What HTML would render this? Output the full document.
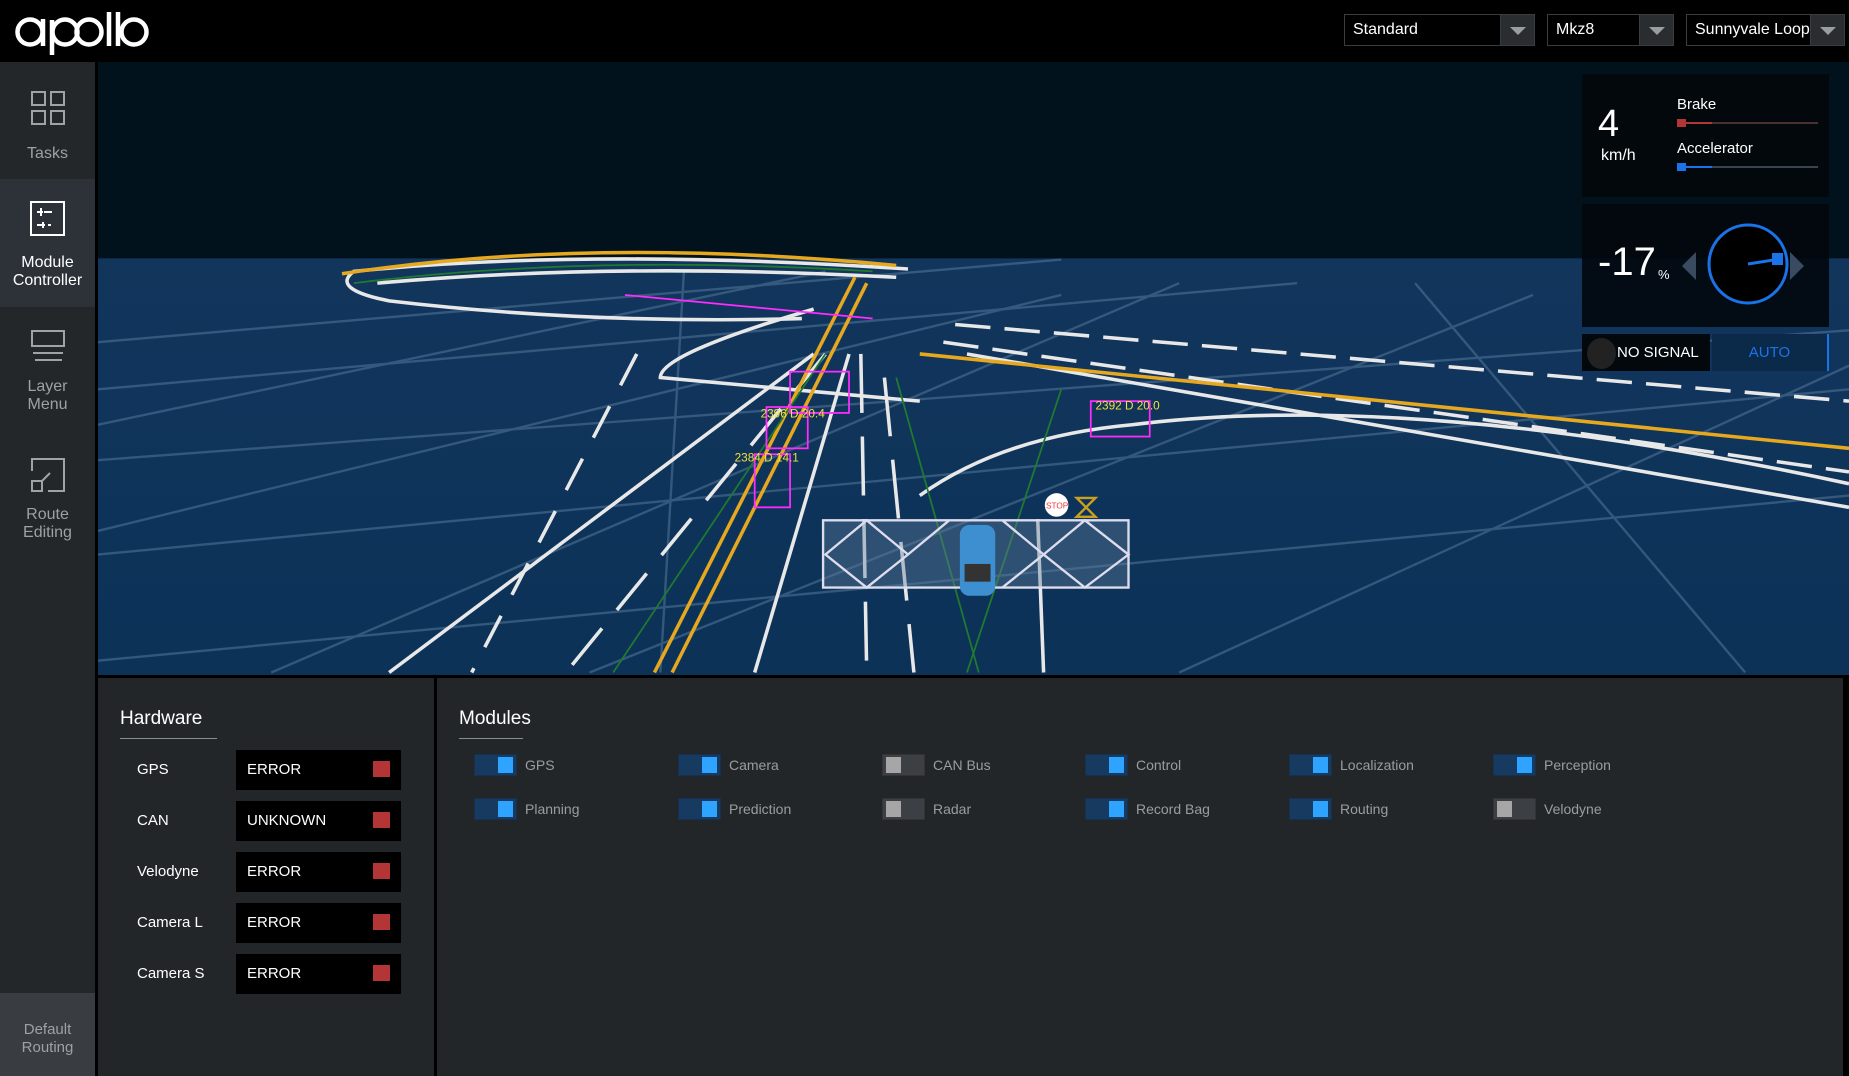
<!DOCTYPE html>
<html><head><meta charset="utf-8"><style>
*{margin:0;padding:0;box-sizing:border-box}
body{width:1849px;height:1076px;overflow:hidden;background:#000;font-family:"Liberation Sans",sans-serif;position:relative}
.abs{position:absolute}
#hdr{left:0;top:0;width:1849px;height:62px;background:#000}
.dd{position:absolute;top:14px;height:32px;border:1px solid #3a3d40;background:#000;color:#fff;font-size:16px;line-height:30px;padding-left:8px}
.dd .ar{position:absolute;right:0;top:0;width:34px;height:30px;background:#2a2d30;border-left:1px solid #3a3d40}
.dd .ar:after{content:"";position:absolute;left:9px;top:12px;border-left:8px solid transparent;border-right:8px solid transparent;border-top:8px solid #9a9da0}
#side{left:0;top:62px;width:95px;height:1014px;background:#24272a;border-right:0}
.si{position:absolute;left:0;width:95px;text-align:center;color:#9ea1a4;font-size:15px;line-height:18px}
#bot{left:98px;top:675px;width:1751px;height:401px;background:#000}
.pn{position:absolute;top:3px;height:398px;background:#232629}
h3{position:absolute;font-weight:normal;color:#fff;font-size:19px}
.ul{position:absolute;height:1px;background:#8a8d90}
.hl{position:absolute;color:#fff;font-size:15px}
.hb{position:absolute;width:165px;height:40px;background:#000;color:#fff;font-size:15px;line-height:40px;padding-left:11px}
.hb i{position:absolute;right:11px;top:11px;width:17px;height:16px;background:#b33535}
.tg{position:absolute;width:43px;height:22px;background:#173a60;border:1px solid #15314f}
.tg i{position:absolute;right:3px;top:2px;width:15px;height:16px;background:#2ea3ff}
.tg.off{background:#3c4044;border-color:#333}
.tg.off i{left:3px;right:auto;background:#a6a6a6}
.tl{position:absolute;color:#9a9da0;font-size:14px}
</style></head><body>
<svg class="abs" style="left:0;top:0" width="1849" height="1076" viewBox="0 0 1568 912" preserveAspectRatio="none">
<defs><linearGradient id="g" x1="0" y1="0" x2="0" y2="1"><stop offset="0" stop-color="#12355c"/><stop offset="1" stop-color="#0c3258"/></linearGradient></defs>
<rect x="80" y="50" width="1488" height="170" fill="#02121c"/>
<rect x="80" y="219" width="1488" height="355" fill="url(#g)"/>
<g stroke="#5a7ea0" stroke-width="2" opacity="0.5" fill="none">
<path d="M83 290 L900 220"/><path d="M83 330 L1100 240"/><path d="M83 390 L1568 280"/><path d="M83 470 L1568 330"/><path d="M83 560 L1568 420"/>
<path d="M83 360 L700 230"/><path d="M83 450 L900 250"/><path d="M230 570 L1000 240"/><path d="M500 570 L1300 250"/><path d="M1000 570 L1568 310"/>
<path d="M560 570 L580 230"/><path d="M1480 570 L1200 240"/></g>
<g stroke="#e8e8e8" stroke-width="3" fill="none">
<path d="M770 228 Q500 210 300 230 Q280 245 330 255 Q500 275 680 270"/>
<path d="M760 235 Q520 222 320 240"/>
<path d="M690 262 Q560 300 560 320 L780 340"/>
<path d="M800 290 L1568 400" stroke-dasharray="30 12"/>
<path d="M810 275 L1568 340" stroke-dasharray="30 12"/>
<path d="M820 300 L1568 430"/>
<path d="M690 300 L330 570"/><path d="M700 300 L480 570" stroke-dasharray="40 20"/>
<path d="M720 300 L640 570"/><path d="M730 300 L735 570" stroke-dasharray="50 20"/>
<path d="M750 320 L775 570" stroke-dasharray="50 20"/>
<path d="M1568 410 Q1200 330 960 360 Q850 370 780 420"/>
<path d="M880 440 L885 570"/>
<path d="M540 300 L400 570" stroke-dasharray="30 20"/>
</g>
<g stroke="#e6a81e" stroke-width="3" fill="none"><path d="M725 235 L555 570"/><path d="M735 240 L570 570"/><path d="M780 300 L1568 380"/><path d="M290 232 Q500 200 760 225"/></g>
<g stroke="#1f7a30" stroke-width="1.5" fill="none"><path d="M700 300 L520 570"/><path d="M760 320 L830 570"/><path d="M900 330 L820 570"/><path d="M300 240 Q500 215 740 230"/></g>
<g stroke="#ff2bff" stroke-width="1.5" fill="none">
<rect x="640" y="385" width="30" height="45"/><rect x="650" y="345" width="35" height="35"/><rect x="925" y="340" width="50" height="30"/><rect x="670" y="315" width="50" height="35"/><path d="M530 250 L740 270"/></g>
<g fill="#f0e040" font-size="10" font-family="Liberation Sans"><text x="623" y="391">2384 D 14.1</text><text x="645" y="354">2396 D 20.4</text><text x="929" y="347">2392 D 20.0</text></g>
<g stroke="#dde" stroke-width="2" fill="#5f7c9c" fill-opacity="0.4"><rect x="698" y="441" width="259" height="57"/></g>
<path d="M700 470 L735 441 L770 470 L735 498 Z M770 470 L805 441 M850 441 L885 470 L920 441 L957 470 L920 498 L885 470 L850 498" stroke="#dde" stroke-width="2" fill="none"/>
<rect x="814" y="445" width="30" height="60" rx="8" fill="#3e8fd0"/><rect x="818" y="478" width="22" height="15" fill="#333"/>
<circle cx="896" cy="428" r="10" fill="#fff"/><text x="887" y="431" font-size="7" fill="#e33" font-family="Liberation Sans">STOP</text>
<path d="M913 422 L929 422 L921 430 L929 438 L913 438 L921 430 Z" fill="none" stroke="#c9a020" stroke-width="2"/>
</svg>
<div id="hdr" class="abs">
<svg class="abs" style="left:0;top:0" width="160" height="62" fill="none" stroke="#fff" stroke-width="4.5">
<circle cx="30" cy="32" r="12.5"/><path d="M43 19V46"/>
<path d="M52 20V55"/><circle cx="65" cy="32" r="12.5"/>
<circle cx="89" cy="32" r="12.5"/>
<path d="M109 12V46M118 12V46"/>
<circle cx="134" cy="32" r="12.5"/>
</svg>
<div class="dd" style="left:1344px;width:191px">Standard<div class="ar"></div></div>
<div class="dd" style="left:1547px;width:127px">Mkz8<div class="ar"></div></div>
<div class="dd" style="left:1686px;width:159px">Sunnyvale Loop<div class="ar"></div></div>
</div>
<div id="side" class="abs">
<div class="si" style="top:0;height:117px"><svg width="36" height="36" style="margin-top:28px" fill="none" stroke="#a0a3a6" stroke-width="2"><rect x="2" y="2" width="13" height="13"/><rect x="21" y="2" width="13" height="13"/><rect x="2" y="21" width="13" height="13"/><rect x="21" y="21" width="13" height="13"/></svg><div style="margin-top:14px;font-size:16px">Tasks</div></div>
<div class="si" style="top:117px;height:128px;background:#2d3239;color:#fff"><svg width="36" height="36" style="margin-top:22px" fill="none" stroke="#fff" stroke-width="2"><rect x="1" y="1" width="33" height="33"/><path d="M7 11h6M11 7v8M14 11h8M7 24h8M13 21v6M18 24h3"/></svg><div style="margin-top:12px;font-size:16px;line-height:18px">Module<br>Controller</div></div>
<div class="si" style="top:245px;height:128px"><svg width="36" height="36" style="margin-top:22px" fill="none" stroke="#a0a3a6" stroke-width="2"><rect x="2" y="2" width="32" height="15"/><path d="M3 24h30M5 31h27"/></svg><div style="margin-top:8px;font-size:16px">Layer<br>Menu</div></div>
<div class="si" style="top:373px;height:128px"><svg width="36" height="36" style="margin-top:22px" fill="none" stroke="#a0a3a6" stroke-width="2"><path d="M2 14V2h32v32H18"/><rect x="2" y="24" width="10" height="10"/><path d="M12 24l8-8"/></svg><div style="margin-top:8px;font-size:16px">Route<br>Editing</div></div>
<div class="si" style="top:931px;height:83px;background:#393c40;padding-top:28px">Default<br>Routing</div>
</div>
<div class="abs" style="left:95px;top:62px;width:3px;height:1014px;background:#000"></div>
<!-- dashboard -->
<div class="abs" style="left:1582px;top:74px;width:247px;height:123px;background:#02080c"></div>
<div class="abs" style="left:1598px;top:103px;color:#fff;font-size:38px">4</div>
<div class="abs" style="left:1601px;top:147px;color:#fff;font-size:16px">km/h</div>
<div class="abs" style="left:1677px;top:96px;color:#fff;font-size:15px">Brake</div>
<div class="abs" style="left:1677px;top:122px;width:141px;height:2px;background:#4a3030"></div>
<div class="abs" style="left:1677px;top:122px;width:35px;height:2px;background:#b33535"></div>
<div class="abs" style="left:1677px;top:119px;width:9px;height:8px;background:#b33535"></div>
<div class="abs" style="left:1677px;top:140px;color:#fff;font-size:15px">Accelerator</div>
<div class="abs" style="left:1677px;top:166px;width:141px;height:2px;background:#3a4450"></div>
<div class="abs" style="left:1677px;top:166px;width:35px;height:2px;background:#1a73e8"></div>
<div class="abs" style="left:1677px;top:163px;width:9px;height:8px;background:#1a73e8"></div>
<div class="abs" style="left:1582px;top:204px;width:247px;height:123px;background:rgba(2,8,12,0.9)"></div>
<div class="abs" style="left:1598px;top:240px;color:#fff;font-size:40px">-17</div>
<div class="abs" style="left:1658px;top:267px;color:#fff;font-size:13px">%</div>
<svg class="abs" style="left:1680px;top:220px" width="130" height="90"><path d="M2 46L16 32V60Z" fill="#3a4a60"/><path d="M110 32L124 46L110 60Z" fill="#3a4a60"/><circle cx="68" cy="44" r="39" fill="#000" stroke="#1a73e8" stroke-width="3"/><path d="M68 44L100 39" stroke="#1a73e8" stroke-width="3"/><rect x="92" y="33" width="11" height="12" fill="#1a73e8"/></svg>
<div class="abs" style="left:1582px;top:334px;width:128px;height:37px;background:#02080c"></div>
<div class="abs" style="left:1587px;top:338px;width:29px;height:31px;border-radius:50%;background:#222"></div>
<div class="abs" style="left:1617px;top:344px;color:#fff;font-size:15px">NO SIGNAL</div>
<div class="abs" style="left:1712px;top:334px;width:117px;height:37px;background:#0b2a4a;border-right:2px solid #1a73e8;color:#1a73e8;font-size:15px;text-align:center;line-height:37px">AUTO</div>
<div id="bot" class="abs">
<div class="pn" style="left:0;width:336px">
<h3 style="left:22px;top:30px">Hardware</h3><div class="ul" style="left:22px;top:60px;width:97px"></div>
<div class="hl" style="left:39px;top:83px">GPS</div><div class="hb" style="left:138px;top:72px">ERROR<i></i></div>
<div class="hl" style="left:39px;top:134px">CAN</div><div class="hb" style="left:138px;top:123px">UNKNOWN<i></i></div>
<div class="hl" style="left:39px;top:185px">Velodyne</div><div class="hb" style="left:138px;top:174px">ERROR<i></i></div>
<div class="hl" style="left:39px;top:236px">Camera L</div><div class="hb" style="left:138px;top:225px">ERROR<i></i></div>
<div class="hl" style="left:39px;top:287px">Camera S</div><div class="hb" style="left:138px;top:276px">ERROR<i></i></div>
</div>
<div class="pn" style="left:339px;width:1406px">
<h3 style="left:22px;top:30px">Modules</h3><div class="ul" style="left:22px;top:60px;width:64px"></div>
<div class="tg" style="left:37px;top:76px"><i></i></div><div class="tl" style="left:88px;top:79px">GPS</div>
<div class="tg" style="left:241px;top:76px"><i></i></div><div class="tl" style="left:292px;top:79px">Camera</div>
<div class="tg off" style="left:445px;top:76px"><i></i></div><div class="tl" style="left:496px;top:79px">CAN Bus</div>
<div class="tg" style="left:648px;top:76px"><i></i></div><div class="tl" style="left:699px;top:79px">Control</div>
<div class="tg" style="left:852px;top:76px"><i></i></div><div class="tl" style="left:903px;top:79px">Localization</div>
<div class="tg" style="left:1056px;top:76px"><i></i></div><div class="tl" style="left:1107px;top:79px">Perception</div>
<div class="tg" style="left:37px;top:120px"><i></i></div><div class="tl" style="left:88px;top:123px">Planning</div>
<div class="tg" style="left:241px;top:120px"><i></i></div><div class="tl" style="left:292px;top:123px">Prediction</div>
<div class="tg off" style="left:445px;top:120px"><i></i></div><div class="tl" style="left:496px;top:123px">Radar</div>
<div class="tg" style="left:648px;top:120px"><i></i></div><div class="tl" style="left:699px;top:123px">Record Bag</div>
<div class="tg" style="left:852px;top:120px"><i></i></div><div class="tl" style="left:903px;top:123px">Routing</div>
<div class="tg off" style="left:1056px;top:120px"><i></i></div><div class="tl" style="left:1107px;top:123px">Velodyne</div>
</div>
</div>
</body></html>
